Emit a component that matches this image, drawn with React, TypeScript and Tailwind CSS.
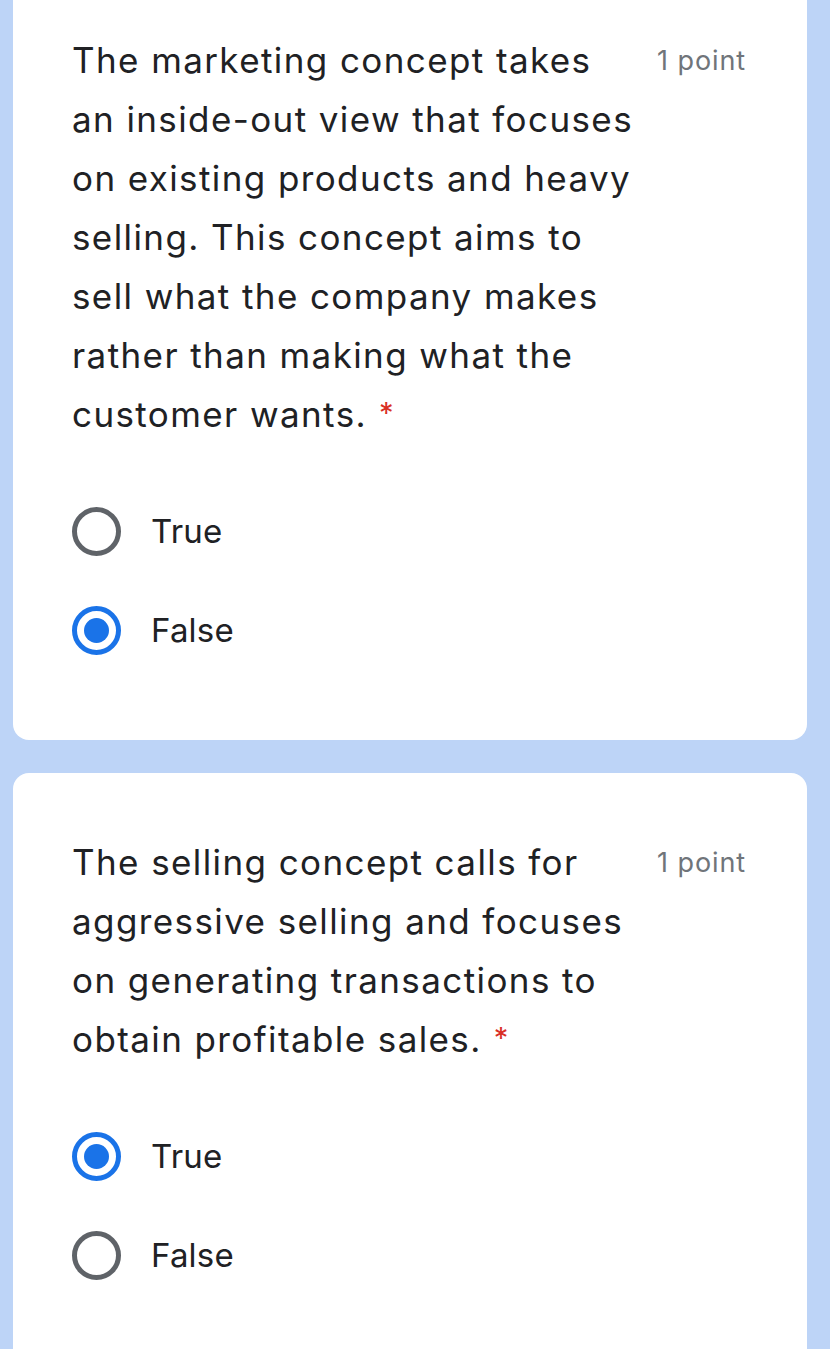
import React, { useState } from "react";

type Question = {
    id: number;
    lines: string[];
    answer: string;
};

const questions: Question[] = [
    {
        id: 1,
        lines: [
            "The marketing concept takes",
            "an inside-out view that focuses",
            "on existing products and heavy",
            "selling. This concept aims to",
            "sell what the company makes",
            "rather than making what the",
            "customer wants.",
        ],
        answer: "False",
    },
    {
        id: 2,
        lines: [
            "The selling concept calls for",
            "aggressive selling and focuses",
            "on generating transactions to",
            "obtain profitable sales.",
        ],
        answer: "True",
    },
];

function Radio({ checked }: { checked: boolean }) {
    return (
        <span
            className={`flex items-center justify-center w-[49px] h-[49px] rounded-full border-[5px] ${
                checked ? "border-[#1a73e8]" : "border-[#5f6368]"
            }`}
        >
            {checked && <span className="w-[25px] h-[25px] rounded-full bg-[#1a73e8]" />}
        </span>
    );
}

function QuestionCard({ q, first }: { q: Question; first?: boolean }) {
    const [value, setValue] = useState(q.answer);

    return (
        <section
            className={`bg-white ml-[13px] mr-[23px] pl-[59px] pr-[61px] ${
                first ? "rounded-b-[16px] pt-[31px] pb-[85px]" : "rounded-[16px] pt-[60px] pb-[120px]"
            }`}
        >
            <div className="flex flex-row justify-between gap-4">
                <p className="text-[35px] leading-[59px] text-[#202124] tracking-[1.4px] whitespace-nowrap">
                    {q.lines.map((line, i) => (
                        <React.Fragment key={i}>
                            {line}
                            {i < q.lines.length - 1 ? (
                                <br />
                            ) : (
                                <span className="text-[#d93025] text-[29px] leading-none relative -top-[4px] ml-[12px]">*</span>
                            )}
                        </React.Fragment>
                    ))}
                </p>
                <span className="text-[27px] leading-[59px] text-[#70757a] whitespace-nowrap tracking-[0.9px]">1 point</span>
            </div>
            <div className="flex flex-col gap-[50px] mt-[63px]">
                {["True", "False"].map((opt) => (
                    <label
                        key={opt}
                        className="flex flex-row items-center gap-[30px] h-[49px] cursor-pointer"
                        onClick={() => setValue(opt)}
                    >
                        <Radio checked={value === opt} />
                        <span className="text-[33px] text-[#202124] tracking-[0.2px]">{opt}</span>
                    </label>
                ))}
            </div>
        </section>
    );
}

export default function App() {
    return (
        <div
            className="h-[1349px] overflow-hidden bg-[#bdd4f7] flex flex-col gap-[33px]"
            style={{ fontFamily: "Inter, Roboto, 'Liberation Sans', sans-serif" }}
        >
            {questions.map((q, i) => (
                <QuestionCard key={q.id} q={q} first={i === 0} />
            ))}
        </div>
    );
}
